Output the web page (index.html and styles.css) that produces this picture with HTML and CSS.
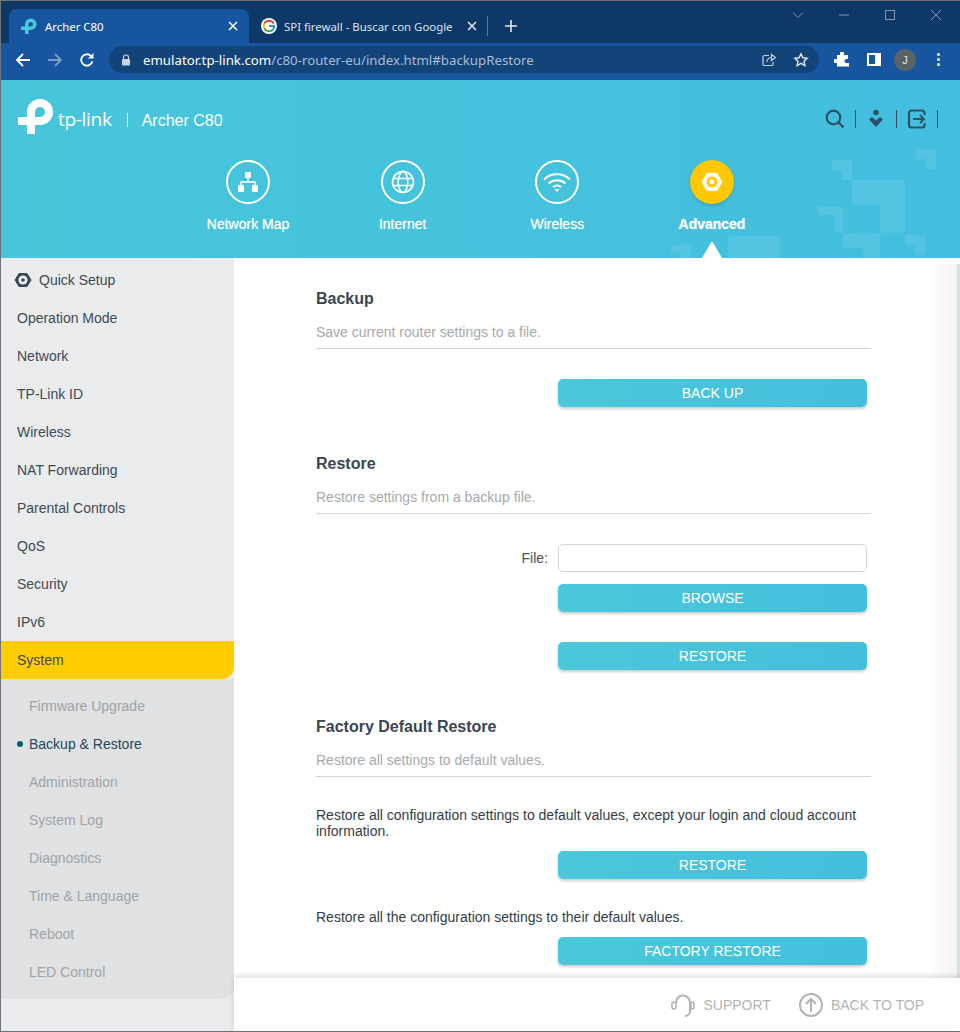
FILE: index.html
```html
<!DOCTYPE html>
<html lang="en">
<head>
    <meta charset="UTF-8">
    <meta name="viewport" content="width=device-width, initial-scale=1.0">
    <title>Archer C80</title>
    <link rel="stylesheet" href="styles.css">
</head>
<body>
<div class="window">
    <!-- browser tabs -->
    <div class="tabstrip">
        <div class="tab tab-active">
            <svg class="tab-icon" viewBox="0 0 36 36" width="16" height="16"><path d="M13 36V14A9 9 0 1 1 22 23H0" fill="none" stroke="#4ac7dc" stroke-width="8"/></svg>
            <span class="tab-title">Archer C80</span>
            <svg class="tab-close" viewBox="0 0 10 10" width="10" height="10"><path d="M1 1l8 8M9 1l-8 8" stroke="#fff" stroke-width="1.5"/></svg>
        </div>
        <div class="tab tab-second">
            <svg class="tab-icon" viewBox="0 0 16 16" width="16" height="16">
                <circle cx="8" cy="8" r="8" fill="#fff"/>
                <path d="M12.6 5.4A5.3 5.3 0 0 0 3.3 5.6" fill="none" stroke="#ea4335" stroke-width="2"/>
                <path d="M3.3 5.6a5.3 5.3 0 0 0 0 4.8" fill="none" stroke="#fbbc05" stroke-width="2"/>
                <path d="M3.3 10.4a5.3 5.3 0 0 0 8.6 1.2" fill="none" stroke="#34a853" stroke-width="2"/>
                <path d="M8 8h5.2a5.3 5.3 0 0 1-1.3 3.6" fill="none" stroke="#4285f4" stroke-width="2"/>
            </svg>
            <span class="tab-title tab-title-dim">SPI firewall - Buscar con Google</span>
            <svg class="tab-close" viewBox="0 0 10 10" width="10" height="10"><path d="M1 1l8 8M9 1l-8 8" stroke="#e3e8ef" stroke-width="1.5"/></svg>
        </div>
        <div class="tab-sep"></div>
        <svg class="tab-new" viewBox="0 0 12 12" width="12" height="12"><path d="M6 0v12M0 6h12" stroke="#e3e8ef" stroke-width="1.6"/></svg>
        <div class="win-controls">
            <svg viewBox="0 0 12 12" width="12" height="12"><path d="M1 3.5l5 5 5-5" fill="none" stroke="#7f95b2"/></svg>
            <svg viewBox="0 0 12 12" width="12" height="12"><path d="M1 6h10" stroke="#7f95b2"/></svg>
            <svg viewBox="0 0 12 12" width="12" height="12"><rect x="1.5" y="1.5" width="9" height="9" fill="none" stroke="#7f95b2"/></svg>
            <svg viewBox="0 0 12 12" width="12" height="12"><path d="M1 1l10 10M11 1L1 11" stroke="#7f95b2"/></svg>
        </div>
    </div>

    <!-- browser toolbar -->
    <div class="toolbar">
        <svg class="tool" viewBox="0 0 16 16" width="16" height="16"><path d="M15 8H2M8 2L2 8l6 6" fill="none" stroke="#fff" stroke-width="1.8"/></svg>
        <svg class="tool" viewBox="0 0 16 16" width="16" height="16"><path d="M1 8h13M8 2l6 6-6 6" fill="none" stroke="#7e9dc6" stroke-width="1.8"/></svg>
        <svg class="tool" viewBox="0 0 16 16" width="16" height="16"><path d="M13.4 9.5A5.7 5.7 0 1 1 12 4" fill="none" stroke="#fff" stroke-width="1.8"/><path d="M14.5 1v5.5H9z" fill="#fff"/></svg>
        <div class="omnibox">
            <svg class="lock" viewBox="0 0 10 12" width="10" height="12"><path d="M2.5 5V3.5a2.5 2.5 0 0 1 5 0V5" fill="none" stroke="#cbd5e2" stroke-width="1.2"/><rect x="1" y="5" width="8" height="6.5" rx="1" fill="#cbd5e2"/></svg>
            <span class="url"><b>emulator.tp-link.com</b>/c80-router-eu/index.html#backupRestore</span>
            <svg class="omni-icon" viewBox="0 0 16 16" width="16" height="16"><path d="M8 3.5H3.5a1.5 1.5 0 0 0-1.5 1.5v7a1.500 1.500 0 0 0 1.500 1.500h7a1.500 1.500 0 0 0 1.500-1.500V10M6 10c0-3 2-4.500 5-4.500M10.500 2.500l4 3-4 3z" fill="none" stroke="#c3d0e0" stroke-width="1.2"/></svg>
            <svg class="omni-icon" viewBox="0 0 16 16" width="16" height="16"><path d="M8 1.800l1.900 4 4.300.5-3.200 3 .9 4.300L8 11.400l-3.900 2.200.9-4.300-3.200-3 4.300-.5z" fill="none" stroke="#e3e8ef" stroke-width="1.4"/></svg>
        </div>
        <svg class="ext" viewBox="0 0 16 16" width="16" height="16"><path d="M6 1.500a2 2 0 0 1 4 0V3h4v4h-1.500a2 2 0 0 0 0 4H15v3.500H3V11H1.500a2 2 0 0 1 0-4H3V3h3z" fill="#fff"/></svg>
        <div class="side-icon"></div>
        <div class="avatar">J</div>
        <div class="dots"><i></i><i></i><i></i></div>
    </div>

    <!-- router header -->
    <header class="header">
        <svg class="pixels" viewBox="0 0 960 178" width="958" height="178">
            <g fill="#fff" fill-opacity=".09">
                <path d="M918 69h20v20h-10v-10h-10z"/>
                <path d="M834 80h20v20h-10v-10h-10z"/>
                <path d="M854 100h53v53h-25v-28h-28z"/>
                <path d="M820 127h25v26h-8v-18h-17z"/>
                <path d="M845 154h37v24h-17v-10h-20z"/>
                <path d="M907 155h20v20h-10v-10h-10z"/>
                <path d="M730 156h52v22h-52z"/>
                <path d="M672 165h20v13h-10v-5h-10z"/>
            </g>
        </svg>
        <div class="header-top">
            <div class="brand">
                <svg class="brand-mark" viewBox="0 0 36 36" width="36" height="36"><path d="M13 36V14A9 9 0 1 1 22 23H0" fill="none" stroke="#fff" stroke-width="8"/></svg>
                <span class="brand-name">tp-link</span>
                <span class="brand-sep"></span>
                <span class="brand-model">Archer C80</span>
            </div>
            <div class="header-tools">
                <div class="header-tool">
                    <svg viewBox="0 0 20 20" width="20" height="20"><circle cx="8.500" cy="8.500" r="6.800" fill="none" stroke="#2c5364" stroke-width="2.200"/><path d="M13.500 13.500l5 5" stroke="#2c5364" stroke-width="2.400"/></svg>
                </div>
                <div class="header-tool">
                    <svg viewBox="0 0 20 20" width="20" height="20"><circle cx="10" cy="3.500" r="2.800" fill="#2c5364"/><path d="M3 10.500L6 8l4 3.500L14 8l3 2.500-7 7.500z" fill="#2c5364"/></svg>
                </div>
                <div class="header-tool">
                    <svg viewBox="0 0 20 20" width="20" height="20"><path d="M17.500 6V4a2.500 2.500 0 0 0-2.500-2.500H4.500A2.500 2.500 0 0 0 2 4v12a2.500 2.500 0 0 0 2.500 2.500H15a2.500 2.500 0 0 0 2.500-2.500v-2" fill="none" stroke="#2c5364" stroke-width="2.200"/><path d="M6 10h11M13 6l4 4-4 4" fill="none" stroke="#2c5364" stroke-width="2"/></svg>
                </div>
            </div>
        </div>
        <nav class="nav">
            <a class="nav-item">
                <span class="nav-circle">
                    <svg viewBox="0 0 24 24" width="24" height="24"><g fill="#fff"><rect x="9" y="2" width="6" height="6" rx="1"/><rect x="2" y="15" width="6" height="7" rx="1"/><rect x="16" y="15" width="6" height="7" rx="1"/></g><path d="M12 8v4M5 15v-3h14v3" fill="none" stroke="#fff" stroke-width="1.300"/></svg>
                </span>
                <span class="nav-label">Network Map</span>
            </a>
            <a class="nav-item">
                <span class="nav-circle">
                    <svg viewBox="0 0 24 24" width="24" height="24"><g fill="none" stroke="#fff" stroke-width="1.600"><circle cx="12" cy="12" r="10.500"/><ellipse cx="12" cy="12" rx="4.800" ry="10.500"/><path d="M2 8.500h20M2 15.500h20"/></g></svg>
                </span>
                <span class="nav-label">Internet</span>
            </a>
            <a class="nav-item">
                <span class="nav-circle">
                    <svg viewBox="0 0 28 20" width="28" height="20"><g fill="none" stroke="#fff" stroke-width="2"><path d="M1 7.500a19 19 0 0 1 26 0"/><path d="M5.500 11.500a13 13 0 0 1 17 0"/><path d="M10 15a6.500 6.500 0 0 1 8 0"/></g><path d="M11.500 17h5L14 20z" fill="#fff"/></svg>
                </span>
                <span class="nav-label">Wireless</span>
            </a>
            <a class="nav-item nav-item-active">
                <span class="nav-circle">
                    <svg viewBox="0 0 24 24" width="22" height="22"><path d="M6.800 3h10.400L22.500 12l-5.300 9H6.800L1.500 12z" fill="#fff" stroke="#fff" stroke-width="1.600" stroke-linejoin="round"/><circle cx="12" cy="12" r="6" fill="#ffc800"/><circle cx="12" cy="12" r="2.700" fill="#fff"/></svg>
                </span>
                <span class="nav-label">Advanced</span>
            </a>
        </nav>
    </header>

    <div class="body">
        <!-- router menu -->
        <aside class="sidebar">
            <ul class="menu">
                <li class="menu-item">
                    <svg class="menu-icon" viewBox="0 0 18 18" width="18" height="18"><path d="M5 2.500h8L17 9l-4 6.500H5L1 9z" fill="#3a4650" stroke="#3a4650" stroke-width="1" stroke-linejoin="round"/><circle cx="9" cy="9" r="4.600" fill="#e9ebed"/><circle cx="9" cy="9" r="1.800" fill="#3a4650"/></svg>
                    Quick Setup
                </li>
                <li class="menu-item">Operation Mode</li>
                <li class="menu-item">Network</li>
                <li class="menu-item">TP-Link ID</li>
                <li class="menu-item">Wireless</li>
                <li class="menu-item">NAT Forwarding</li>
                <li class="menu-item">Parental Controls</li>
                <li class="menu-item">QoS</li>
                <li class="menu-item">Security</li>
                <li class="menu-item">IPv6</li>
                <li class="menu-item menu-item-open">System</li>
            </ul>
            <ul class="submenu">
                <li class="sub-item">Firmware Upgrade</li>
                <li class="sub-item sub-item-on">Backup &amp; Restore</li>
                <li class="sub-item">Administration</li>
                <li class="sub-item">System Log</li>
                <li class="sub-item">Diagnostics</li>
                <li class="sub-item">Time &amp; Language</li>
                <li class="sub-item">Reboot</li>
                <li class="sub-item">LED Control</li>
            </ul>
        </aside>

        <!-- page content -->
        <main class="content">
            <div class="panel">
                <section class="block">
                    <h2>Backup</h2>
                    <p class="block-desc">Save current router settings to a file.</p>
                    <div class="field"><button class="btn">BACK UP</button></div>
                </section>
                <section class="block">
                    <h2>Restore</h2>
                    <p class="block-desc">Restore settings from a backup file.</p>
                    <div class="field">
                        <label class="file-label" for="file">File:</label>
                        <input class="file-input" id="file" type="text">
                    </div>
                    <div class="field field-tight"><button class="btn">BROWSE</button></div>
                    <div class="field"><button class="btn">RESTORE</button></div>
                </section>
                <section class="block">
                    <h2>Factory Default Restore</h2>
                    <p class="block-desc">Restore all settings to default values.</p>
                    <p class="note">Restore all configuration settings to default values, except your login and cloud account information.</p>
                    <div class="field field-tight"><button class="btn">RESTORE</button></div>
                    <p class="note">Restore all the configuration settings to their default values.</p>
                    <div class="field field-tight"><button class="btn">FACTORY RESTORE</button></div>
                </section>
            </div>
            <footer class="footer">
                <a class="footer-link">
                    <svg viewBox="0 0 24 24" width="24" height="24"><path d="M5 10V9.500a7 7 0 0 1 14 0V18a5 5 0 0 1-5 5" fill="none" stroke="#b4b4b4" stroke-width="2"/><rect x="1" y="9" width="4" height="7" rx="2" fill="none" stroke="#b4b4b4" stroke-width="1.600"/><rect x="20" y="9" width="3" height="7" rx="1.500" fill="none" stroke="#b4b4b4" stroke-width="1.600"/></svg>
                    SUPPORT
                </a>
                <a class="footer-link">
                    <svg viewBox="0 0 24 24" width="24" height="24"><circle cx="12" cy="12" r="11" fill="none" stroke="#b4b4b4" stroke-width="2"/><path d="M12 19V6M7 11l5-5 5 5" fill="none" stroke="#b4b4b4" stroke-width="2"/></svg>
                    BACK TO TOP
                </a>
            </footer>
        </main>
    </div>
</div>
</body>
</html>
```

FILE: styles.css
```css
* {
    box-sizing: border-box;
}

html, body {
    margin: 0;
    height: 100%;
}

body {
    font-family: "Liberation Sans", Arial, sans-serif;
    font-size: 14px;
    overflow: hidden;
    background-color: #fff;
}

.window {
    display: flex;
    flex-direction: column;
    width: 960px;
    height: 1032px;
    border-top: 1px solid #6f7378;
    border-left: 1px solid #6f7378;
    border-bottom: 1px solid #6f7378;
}

/* tabs */
.tabstrip {
    display: flex;
    align-items: flex-end;
    height: 42px;
    padding-left: 8px;
    background-color: #0d3868;
    flex: none;
}

.tab {
    display: flex;
    align-items: center;
    width: 240px;
    height: 34px;
    padding: 0 11px 0 12px;
    font-family: "Noto Sans", sans-serif;
    font-size: 11.4px;
    color: #fff;
}

.tab-second {
    padding-right: 12px;
}

.tab-active {
    background-color: #17569f;
    border-radius: 8px 8px 0 0;
}

.tab-title {
    flex: 1;
    margin-left: 8px;
    white-space: nowrap;
}

.tab-title-dim {
    margin-left: 7px;
    color: #dce3ec;
}

.tab-close {
    flex: none;
}

.tab-sep {
    width: 1px;
    height: 20px;
    margin: 0 0 7px -2px;
    background-color: #5a7698;
}

.tab-new {
    margin: 0 0 11px 17px;
}

.win-controls {
    display: flex;
    gap: 34px;
    margin: 0 0 22px auto;
    padding-right: 18px;
}

/* toolbar */
.toolbar {
    display: flex;
    align-items: center;
    height: 37px;
    padding: 0 0 4px 14px;
    background-color: #17569f;
    flex: none;
}

.tool {
    margin-right: 16px;
}

.omnibox {
    display: flex;
    align-items: center;
    width: 710px;
    height: 27px;
    margin-left: -2px;
    padding: 0 10px 0 12px;
    border-radius: 14px;
    background-color: #124379;
}

.lock {
    flex: none;
}

.url {
    flex: 1;
    margin-left: 12px;
    font-family: "Noto Sans", sans-serif;
    font-size: 13.25px;
    color: #a9bdd6;
    white-space: nowrap;
}

.url b {
    font-weight: 400;
    color: #fff;
}

.omni-icon {
    margin-left: 16px;
}

.ext {
    margin-left: 15px;
}

.side-icon {
    width: 14px;
    height: 13px;
    margin-left: 17px;
    border: 2px solid #fff;
    border-right-width: 6px;
}

.avatar {
    width: 22px;
    height: 22px;
    margin-left: 13px;
    border-radius: 50%;
    background-color: #5a6268;
    color: #e8eaed;
    font-size: 11px;
    line-height: 22px;
    text-align: center;
}

.dots {
    display: flex;
    flex-direction: column;
    gap: 2px;
    margin-left: 21px;
}

.dots i {
    display: block;
    width: 3px;
    height: 3px;
    border-radius: 50%;
    background-color: #fff;
}

/* router header */
.header {
    position: relative;
    height: 178px;
    background: linear-gradient(90deg, #47c6da, #43bedf);
    flex: none;
    overflow: hidden;
}

.pixels {
    position: absolute;
    top: 0;
    left: -1px;
}

.header-top {
    position: relative;
    display: flex;
    justify-content: space-between;
    height: 80px;
    padding: 18px 22px 0 17px;
}

.brand {
    display: flex;
    align-items: center;
    height: 36px;
    color: #fff;
}

.brand-name {
    margin: 5px 0 0 4px;
    font-family: "Open Sans", sans-serif;
    font-size: 19px;
    letter-spacing: -.3px;
}

.brand-sep {
    width: 1px;
    height: 14px;
    margin: 8px 14px 0 15px;
    background-color: #fff;
}

.brand-model {
    margin-top: 10px;
    font-size: 16px;
}

.header-tools {
    display: flex;
    height: 36px;
    margin-top: 3px;
    align-items: center;
}

.header-tool {
    display: flex;
    align-items: center;
    justify-content: center;
    width: 41px;
    height: 18px;
    border-right: 1px solid #2c5364;
}

.nav {
    position: relative;
    display: flex;
    padding-left: 169.7px;
}

.nav-item {
    position: relative;
    display: flex;
    flex-direction: column;
    align-items: center;
    width: 154.67px;
    height: 98px;
    color: #fff;
}

.nav-circle {
    display: flex;
    align-items: center;
    justify-content: center;
    width: 44px;
    height: 44px;
    border: 2px solid #fff;
    border-radius: 50%;
}

.nav-label {
    margin-top: 12px;
    line-height: 16px;
    text-shadow: 0 0 1px rgba(255, 255, 255, .6);
}

.nav-item-active .nav-circle {
    border: none;
    background-color: #ffc800;
    box-shadow: 0 2px 4px rgba(0, 0, 0, .15);
}

.nav-item-active .nav-label {
    font-weight: bold;
}

.nav-item-active::after {
    content: "";
    position: absolute;
    left: 67px;
    bottom: 0;
    border: 10px solid transparent;
    border-top: none;
    border-bottom: 17px solid #fff;
}

/* layout under the header */
.body {
    display: flex;
    flex: 1;
    min-height: 0;
}

.sidebar {
    width: 233px;
    padding-top: 3px;
    background-color: #e9ebed;
    flex: none;
}

.menu, .submenu {
    margin: 0;
    padding: 0;
    list-style: none;
}

.menu-item {
    display: flex;
    align-items: center;
    height: 38px;
    padding-left: 16px;
    color: #3f4a54;
}

.menu-icon {
    margin-right: 7px;
    margin-left: -3px;
}

.menu-item-open {
    border-radius: 0 0 12px 0;
    background-color: #ffcc00;
}

.submenu {
    padding: 8px 0;
    border-radius: 0 0 12px 0;
    background-color: #dfe1e3;
}

.sub-item {
    position: relative;
    height: 38px;
    padding-left: 28px;
    line-height: 38px;
    color: #a0a4a8;
}

.sub-item-on {
    color: #1f4a5c;
}

.sub-item-on::before {
    content: "";
    position: absolute;
    left: 16px;
    top: 16px;
    width: 6px;
    height: 6px;
    border-radius: 50%;
    background-color: #0f5a6b;
}

/* page content */
.content {
    display: flex;
    flex-direction: column;
    flex: 1;
    min-width: 0;
    background-color: #fff;
}

.panel {
    position: relative;
    flex: 1;
    min-height: 0;
    padding: 30px 0 0 82px;
    overflow: hidden;
}

/* scroll edge on the right of the page */
.panel::after {
    content: "";
    position: absolute;
    top: 6px;
    right: 0;
    bottom: 0;
    width: 28px;
    border-right: 3px solid #d3e2e3;
    background: linear-gradient(90deg, rgba(245, 243, 244, 0), #f5f3f4);
}

.block {
    width: 555px;
    margin-bottom: 46px;
}

.block h2 {
    margin: 0;
    padding-top: 1px;
    font-size: 16px;
    line-height: 20px;
    color: #3a4650;
}

.block-desc {
    margin: 13px 0 0;
    padding-bottom: 6px;
    border-bottom: 1px solid #d6d6d6;
    line-height: 20px;
    color: #a6a9ac;
}

.field {
    display: flex;
    align-items: center;
    justify-content: flex-end;
    width: 551px;
    margin-top: 30px;
}

.field-tight {
    margin-top: 12px;
}

.file-label {
    margin-right: 10px;
    color: #4a5259;
}

.file-input {
    width: 309px;
    height: 28px;
    padding: 0 8px;
    border: 1px solid #d4d4d4;
    border-radius: 5px;
    background-color: #fff;
}

.btn {
    width: 309px;
    height: 28px;
    padding: 0;
    border: none;
    border-radius: 5px;
    background: linear-gradient(90deg, #4bc8da, #43bfde);
    box-shadow: 0 2px 3px rgba(0, 0, 0, .2);
    color: #fff;
    font-family: inherit;
    font-size: 14px;
}

.note {
    margin: 30px 0 0;
    line-height: 16px;
    color: #333d47;
}

.footer {
    position: relative;
    display: flex;
    align-items: center;
    justify-content: flex-end;
    gap: 28px;
    height: 53px;
    padding-right: 36px;
    box-shadow: 0 -2px 6px rgba(0, 0, 0, .14);
    background-color: #fff;
    flex: none;
}

.footer-link {
    display: flex;
    align-items: center;
    gap: 8px;
    font-size: 14px;
    color: #b4b4b4;
}
```
